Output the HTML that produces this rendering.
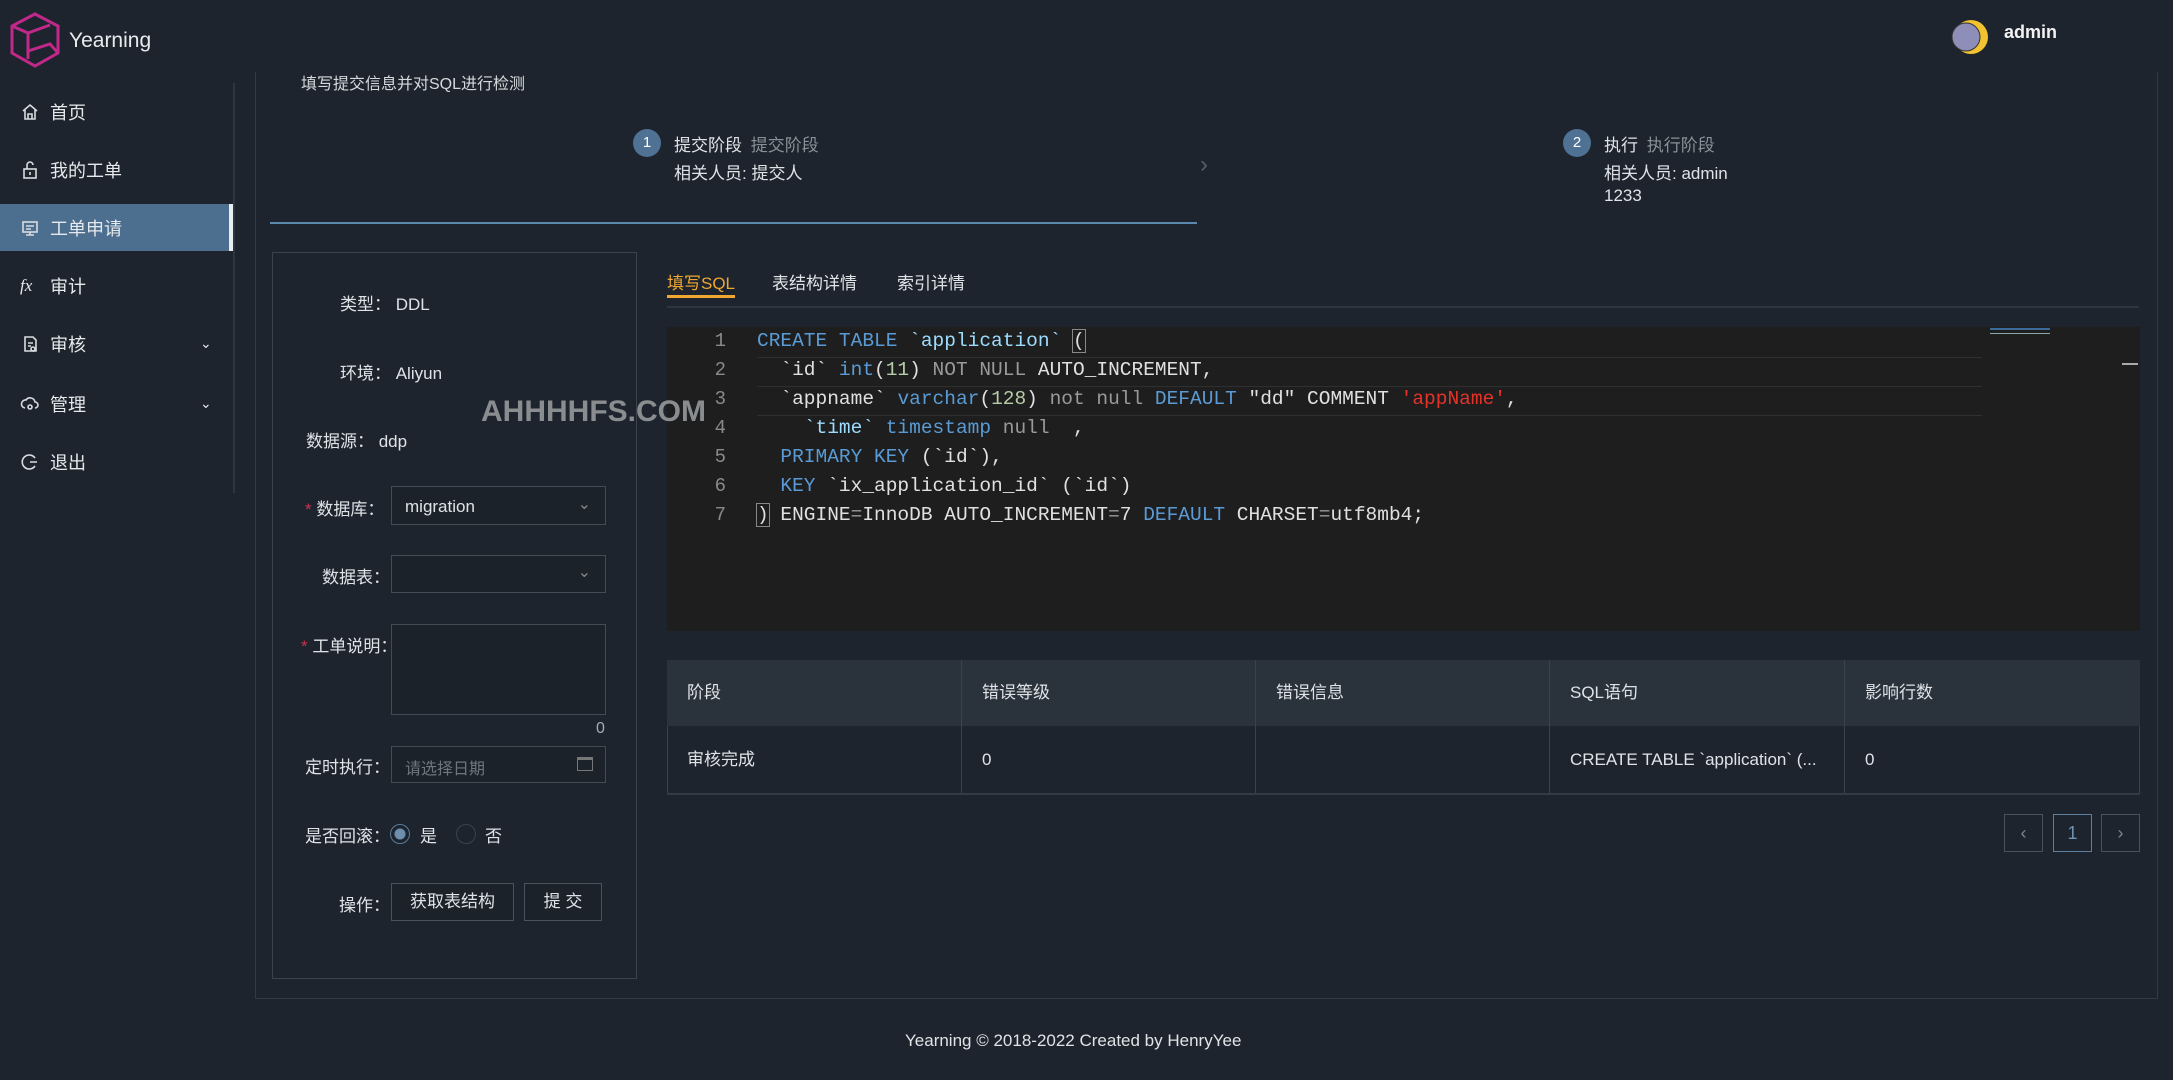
<!DOCTYPE html>
<html><head><meta charset="utf-8"><style>
*{margin:0;padding:0;box-sizing:border-box}
body{width:2173px;height:1080px;background:#1d242d;font-family:"Liberation Sans","Noto Sans CJK SC",sans-serif;color:#dfe3e8;position:relative;overflow:hidden;font-size:17px}
.a{position:absolute;white-space:nowrap}
.menu{position:absolute;left:0;width:233px;height:47px;display:flex;align-items:center;padding-left:20px;font-size:18px;color:#e6e9ec}
.menu svg{width:20px;height:20px;margin-right:10px;stroke:#d8dce0;fill:none;stroke-width:1.6}
.active{background:#4d6f8f;border-right:4px solid #e8edf2}
.box{position:absolute;border:1px solid #434b55;background:#1b222a}
.code{position:absolute;left:757px;font-family:"Liberation Mono",monospace;font-size:19.5px;letter-spacing:0;white-space:pre;color:#e0e0e0}
.ln{position:absolute;left:706px;width:20px;text-align:right;font-family:"Liberation Mono",monospace;font-size:19px;color:#8a8a8a}
.k{color:#5a9bd5}.i{color:#9cdcfe}.n{color:#b5cea8}.g{color:#9a9a9a}.r{color:#e5332a}
.th{position:absolute;top:660px;height:66px;line-height:66px;font-size:17px;padding-left:20px;border-right:1px solid #3a424c}
.td{position:absolute;top:726px;height:67px;line-height:67px;font-size:17px;padding-left:20px;border-right:1px solid #3a424c}
.pg{position:absolute;top:814px;width:39px;height:38px;border:1px solid #48515c;text-align:center;line-height:36px;color:#7d8590;font-size:18px}
</style></head><body>
<svg class="a" style="left:8px;top:11px" width="54" height="58" viewBox="0 0 54 58"><g fill="none" stroke="#c1288a" stroke-width="3"><polygon points="27,3 50,15 50,42 27,55 4,42 4,15"/><polyline points="4,15 20,22 20,48"/><polyline points="20,22 42,14"/><polyline points="20,40 42,33 50,42"/></g></svg>
<div class="a" style="left:69px;top:29px;font-size:21px;color:#e8ebee">Yearning</div>
<svg class="a" style="left:1948px;top:16px" width="42" height="42" viewBox="0 0 42 42"><circle cx="23" cy="21" r="17" fill="#f2c230"/><circle cx="18" cy="21" r="14" fill="#8e8fb8" stroke="#333" stroke-width="1"/></svg>
<div class="a" style="left:2004px;top:22px;font-size:18px;font-weight:bold;color:#f2f2f2">admin</div>
<div class="a" style="left:233px;top:83px;width:2px;height:410px;background:#2d3640"></div>
<div class="menu" style="top:88px"><svg viewBox="0 0 20 20"><path d="M3 9 L10 3 L17 9 M5 8 V17 H15 V8 M8 17 V12 H12 V17"/></svg>首页</div>
<div class="menu" style="top:146px"><svg viewBox="0 0 20 20"><rect x="4" y="9" width="12" height="9"/><path d="M7 9 V5 a3 3 0 0 1 6 0"/><path d="M10 12 v3"/></svg>我的工单</div>
<div class="menu active" style="top:204px"><svg viewBox="0 0 20 20"><rect x="3" y="4" width="14" height="10"/><path d="M10 14 v3 M6 17 h8 M6 8 h8 M6 11 h5"/></svg>工单申请</div>
<div class="menu" style="top:262px"><span style="font-style:italic;font-family:'Liberation Serif',serif;width:20px;margin-right:10px;font-size:17px">fx</span>审计</div>
<div class="menu" style="top:320px"><svg viewBox="0 0 20 20"><path d="M5 3 H13 L16 6 V17 H5 Z M8 9 h5 M8 12 h3"/><circle cx="13" cy="15" r="2"/></svg>审核<span style="position:absolute;left:200px;font-size:14px">&#8964;</span></div>
<div class="menu" style="top:380px"><svg viewBox="0 0 20 20"><path d="M5 14 a4 4 0 0 1 1-8 a5 5 0 0 1 9 2 a3 3 0 0 1 0 6"/><circle cx="10" cy="13" r="2"/></svg>管理<span style="position:absolute;left:200px;font-size:14px">&#8964;</span></div>
<div class="menu" style="top:438px"><svg viewBox="0 0 20 20"><path d="M15 6 A7 7 0 1 0 15 14 M10 10 H17"/></svg>退出</div>
<div class="a" style="left:255px;top:72px;width:1903px;height:927px;border:1px solid #323a44;border-top:none"></div>
<div class="a" style="left:301px;top:70px;font-size:16px;color:#d5d9dd">填写提交信息并对SQL进行检测</div>
<div class="a" style="left:633px;top:129px;width:28px;height:28px;border-radius:50%;background:#4f7193;color:#fff;text-align:center;line-height:28px;font-size:15px">1</div>
<div class="a" style="left:674px;top:131px;font-size:17px">提交阶段 <span style="color:#8a9098;margin-left:4px">提交阶段</span></div>
<div class="a" style="left:674px;top:159px;font-size:17px">相关人员: 提交人</div>
<div class="a" style="left:1200px;top:151px;font-size:24px;color:#555d66">&#8250;</div>
<div class="a" style="left:1563px;top:129px;width:28px;height:28px;border-radius:50%;background:#4f7193;color:#fff;text-align:center;line-height:28px;font-size:15px">2</div>
<div class="a" style="left:1604px;top:131px;font-size:17px">执行 <span style="color:#8a9098;margin-left:4px">执行阶段</span></div>
<div class="a" style="left:1604px;top:159px;font-size:17px">相关人员: admin</div>
<div class="a" style="left:1604px;top:186px;font-size:17px">1233</div>
<div class="a" style="left:270px;top:222px;width:927px;height:2px;background:#5d88ad"></div>
<div class="a" style="left:272px;top:252px;width:365px;height:727px;border:1px solid #3a424c"></div>
<div class="a" style="left:340px;top:290px;font-size:17px">类型：&nbsp;DDL</div>
<div class="a" style="left:340px;top:359px;font-size:17px">环境：&nbsp;Aliyun</div>
<div class="a" style="left:306px;top:427px;font-size:17px">数据源：&nbsp;ddp</div>
<div class="a" style="left:305px;top:495px;font-size:17px"><span style="color:#d03050">*</span> 数据库：</div>
<div class="box" style="left:391px;top:486px;width:215px;height:39px;padding:10px 13px;font-size:17px">migration<span style="position:absolute;right:14px;top:7px;color:#888;font-size:16px">&#8964;</span></div>
<div class="a" style="left:322px;top:563px;font-size:17px">数据表：</div>
<div class="box" style="left:391px;top:555px;width:215px;height:38px"><span style="position:absolute;right:14px;top:6px;color:#888;font-size:16px">&#8964;</span></div>
<div class="a" style="left:301px;top:632px;font-size:17px"><span style="color:#d03050">*</span> 工单说明：</div>
<div class="box" style="left:391px;top:624px;width:215px;height:91px"></div>
<div class="a" style="left:596px;top:720px;font-size:16px;color:#a6abb1">0</div>
<div class="a" style="left:305px;top:753px;font-size:17px">定时执行：</div>
<div class="box" style="left:391px;top:746px;width:215px;height:37px;padding:8px 13px;font-size:16px;color:#6f767e">请选择日期<span style="position:absolute;right:12px;top:10px;width:16px;height:14px;border:1.5px solid #777;border-top-width:3px"></span></div>
<div class="a" style="left:305px;top:822px;font-size:17px">是否回滚：</div>
<div class="a" style="left:390px;top:824px;width:20px;height:20px;border-radius:50%;border:1.5px solid #5a7b9a;background:radial-gradient(circle,#6f8fae 0 5px,transparent 6px)"></div>
<div class="a" style="left:420px;top:822px;font-size:17px">是</div>
<div class="a" style="left:456px;top:824px;width:20px;height:20px;border-radius:50%;border:1.5px solid #3a424c"></div>
<div class="a" style="left:485px;top:822px;font-size:17px">否</div>
<div class="a" style="left:339px;top:891px;font-size:17px">操作：</div>
<div class="box" style="left:391px;top:883px;width:123px;height:38px;text-align:center;line-height:36px;font-size:17px;border-color:#4a525c">获取表结构</div>
<div class="box" style="left:524px;top:883px;width:78px;height:38px;text-align:center;line-height:36px;font-size:17px;border-color:#4a525c">提 交</div>
<div class="a" style="left:667px;top:269px;font-size:17px;color:#f0a732">填写SQL</div>
<div class="a" style="left:772px;top:269px;font-size:17px">表结构详情</div>
<div class="a" style="left:897px;top:269px;font-size:17px">索引详情</div>
<div class="a" style="left:667px;top:306px;width:1472px;height:2px;background:#2d3640"></div>
<div class="a" style="left:667px;top:295px;width:68px;height:3px;background:#f0a732"></div>
<div class="a" style="left:667px;top:327px;width:1473px;height:304px;background:#1e1e1e"></div>
<div class="a" style="left:757px;top:357px;width:1225px;height:59px;border-top:1px solid #2f2f2f;border-bottom:1px solid #2f2f2f"></div>
<div class="a" style="left:757px;top:386px;width:1225px;height:1px;background:#2f2f2f"></div>
<div class="a" style="left:1990px;top:328px;width:60px;height:10px;background:linear-gradient(#3a6a9a 0 2px,transparent 2px 5px,#8aa 5px 6px,transparent 6px)"></div>
<div class="a" style="left:2122px;top:363px;width:16px;height:2px;background:#aaa"></div>
<div class="ln" style="top:330px">1</div><div class="ln" style="top:359px">2</div><div class="ln" style="top:388px">3</div><div class="ln" style="top:417px">4</div><div class="ln" style="top:446px">5</div><div class="ln" style="top:475px">6</div><div class="ln" style="top:504px">7</div>
<div class="code" style="top:330px"><span class="k">CREATE TABLE</span> <span class="i">`application`</span> <span style="outline:1px solid #888">(</span></div>
<div class="code" style="top:359px">  `id` <span class="k">int</span>(<span class="n">11</span>) <span class="g">NOT NULL</span> AUTO_INCREMENT,</div>
<div class="code" style="top:388px">  `appname` <span class="k">varchar</span>(<span class="n">128</span>) <span class="g">not null</span> <span class="k">DEFAULT</span> "dd" COMMENT <span class="r">'appName'</span>,</div>
<div class="code" style="top:417px">    <span class="i">`time`</span> <span class="k">timestamp</span> <span class="g">null</span>  ,</div>
<div class="code" style="top:446px">  <span class="k">PRIMARY KEY</span> (`id`),</div>
<div class="code" style="top:475px">  <span class="k">KEY</span> `ix_application_id` (`id`)</div>
<div class="code" style="top:504px"><span style="outline:1px solid #888">)</span> ENGINE<span class="g">=</span>InnoDB AUTO_INCREMENT<span class="g">=</span>7 <span class="k">DEFAULT</span> CHARSET<span class="g">=</span>utf8mb4;</div>
<div class="a" style="left:481px;top:395px;font-size:30px;font-weight:bold;color:#8a8d90">AHHHHFS.COM</div>
<div class="a" style="left:667px;top:660px;width:1473px;height:134px;border:1px solid #3a424c;background:#1d242d"></div>
<div class="a" style="left:667px;top:660px;width:1473px;height:66px;background:#2a323b"></div>
<div class="th" style="left:667px;width:295px">阶段</div>
<div class="th" style="left:962px;width:294px">错误等级</div>
<div class="th" style="left:1256px;width:294px">错误信息</div>
<div class="th" style="left:1550px;width:295px">SQL语句</div>
<div class="th" style="left:1845px;width:294px;border:none">影响行数</div>
<div class="td" style="left:667px;width:295px">审核完成</div>
<div class="td" style="left:962px;width:294px">0</div>
<div class="td" style="left:1256px;width:294px"></div>
<div class="td" style="left:1550px;width:295px">CREATE TABLE `application` (...</div>
<div class="td" style="left:1845px;width:294px;border:none">0</div>
<div class="a" style="left:667px;top:793px;width:1473px;height:2px;background:#333b45"></div>
<div class="pg" style="left:2004px">&#8249;</div>
<div class="pg" style="left:2053px;border-color:#5d7f9f;color:#6f93b5">1</div>
<div class="pg" style="left:2101px">&#8250;</div>
<div class="a" style="left:905px;top:1031px;font-size:17px;color:#e0e3e6">Yearning © 2018-2022 Created by HenryYee</div>
</body></html>
